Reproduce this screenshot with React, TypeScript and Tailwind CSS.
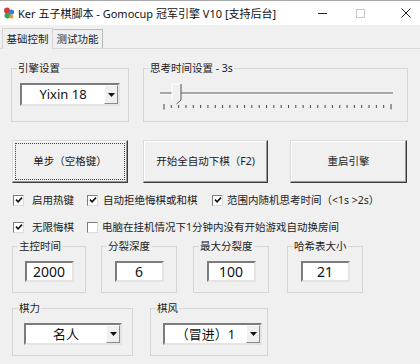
import type { ReactNode } from 'react';

const sunken =
  'border-2 border-t-[#7c7c7c] border-l-[#7c7c7c] border-r-[#e4e4e4] border-b-[#e4e4e4] bg-white';

function Group({ label, className, children }: { label: string; className: string; children?: ReactNode }) {
  return (
    <fieldset className={`border border-[#d6d6d6] ${className}`}>
      <legend className="ml-[5px] px-[1px] text-[10.5px] leading-[14px] text-[#222]">{label}</legend>
      {children}
    </fieldset>
  );
}

function Combo({ value, className }: { value: string; className: string }) {
  return (
    <div className={`flex ${sunken} ${className}`}>
      <div className="flex flex-1 items-center justify-center text-[13px] leading-none text-[#111]">{value}</div>
      <div className="flex w-[14px] items-center justify-center border border-t-white border-l-white border-r-[#8a8a8a] border-b-[#8a8a8a] bg-[#f0f0f0]">
        <svg width="7" height="4" viewBox="0 0 7 4">
          <path d="M0 0h7L3.5 4z" fill="#111" />
        </svg>
      </div>
    </div>
  );
}

function NumBox({ value }: { value: string }) {
  return (
    <div className={`mx-auto mt-[8px] flex h-[21px] w-[49px] items-center justify-center ${sunken} text-[14px] leading-none text-[#111]`}>
      {value}
    </div>
  );
}

function Check({ checked, label, className, labelClass }: { checked: boolean; label: string; className: string; labelClass: string }) {
  return (
    <div className={`flex items-center ${className}`}>
      <div className="flex h-[11px] w-[11px] shrink-0 items-center justify-center border border-t-[#7c7c7c] border-l-[#7c7c7c] border-r-[#dcdcdc] border-b-[#dcdcdc] bg-white">
        {checked && (
          <svg width="8" height="8" viewBox="0 0 8 8">
            <path d="M1 3.6L3.1 5.8L7 1.6" stroke="#111" strokeWidth="1.6" fill="none" />
          </svg>
        )}
      </div>
      <span className={`whitespace-nowrap text-[10.5px] leading-none text-[#222] ${labelClass}`}>{label}</span>
    </div>
  );
}

function Slider() {
  const ticks = Array.from({ length: 32 }, (_, i) => 20 + (i * 227) / 31);
  return (
    <svg width="263" height="40" viewBox="0 0 263 40" className="block">
      <line x1="16" y1="18" x2="249" y2="18" stroke="#8e8e8e" strokeWidth="1.5" />
      <line x1="16" y1="19.5" x2="249" y2="19.5" stroke="#fbfbfb" strokeWidth="1" />
      <path d="M28 9H37V25L32.5 29L28 25Z" fill="#f0f0f0" />
      <path d="M28 25V9H37" stroke="#ffffff" fill="none" />
      <path d="M37 9V25L32.5 29" stroke="#555" fill="none" />
      {ticks.map((x, i) => (
        <line
          key={i}
          x1={x}
          x2={x}
          y1={i === 0 || i === 31 ? 29 : 30}
          y2={i === 0 || i === 31 ? 34.5 : 33}
          stroke="#444"
          strokeWidth="1"
        />
      ))}
    </svg>
  );
}

export default function App() {
  return (
    <div className="h-[364px] w-[420px] overflow-hidden bg-[#f0f0f0] font-['Noto_Sans','Noto_Sans_CJK_SC',sans-serif] text-[#222]">
      {/* title bar */}
      <div className="flex h-[25px] items-center border-t border-[#a9a9a9] bg-white">
        <svg width="12" height="12" viewBox="0 0 12 12" className="ml-[3px]">
          <circle cx="4" cy="3.5" r="3" fill="#d83b3b" />
          <circle cx="8.5" cy="5" r="2.6" fill="#3a7bd5" />
          <circle cx="4.5" cy="8.5" r="3" fill="#3fa34d" />
          <circle cx="8.5" cy="9.5" r="2" fill="#e0a02a" />
        </svg>
        <span className="ml-[3px] whitespace-nowrap text-[11px] leading-none text-[#111]">
          Ker 五子棋脚本 - Gomocup 冠军引擎 V10 [支持后台]
        </span>
        <div className="ml-auto flex items-center">
          <div className="h-[1px] w-[9px] bg-[#222]" />
          <div className="ml-[29px] h-[9px] w-[9px] border border-[#c8c8c8]" />
          <svg width="10" height="10" viewBox="0 0 10 10" className="ml-[36px] mr-[9px]">
            <path d="M0.5 0.5L9.5 9.5M9.5 0.5L0.5 9.5" stroke="#222" strokeWidth="1" />
          </svg>
        </div>
      </div>

      {/* tabs */}
      <div className="flex h-[24px] items-end border-b border-[#d9d9d9]">
        <div className="-mb-px ml-[2px] flex h-[21px] w-[51px] items-center justify-center border-x border-t border-[#d2d2d2] bg-[#f0f0f0] text-[10.5px] leading-none">
          基础控制
        </div>
        <div className="flex h-[19px] w-[50px] items-center justify-center border-r border-t border-[#b9b9b9] text-[10.5px] leading-none">
          测试功能
        </div>
      </div>

      {/* engine + think time */}
      <div className="mt-[12px] flex">
        <Group label="引擎设置" className="ml-[11px] h-[61px] w-[118px]">
          <Combo value="Yixin 18" className="ml-[8px] mt-[8px] h-[23px] w-[100px]" />
        </Group>
        <Group label="思考时间设置 - 3s" className="ml-[14px] h-[61px] w-[265px]">
          <Slider />
        </Group>
      </div>

      {/* buttons */}
      <div className="mt-[18px] flex text-[10.5px]">
        <button className="ml-[12px] flex h-[43px] w-[116px] items-center justify-center border border-t-[#dadada] border-l-[#dadada] border-r-[#3c3c3c] border-b-[#3c3c3c] bg-[#f0f0f0] leading-none shadow-[inset_-1px_-1px_0_#9a9a9a,inset_1px_1px_0_#ffffff] outline-1 -outline-offset-4 outline-dotted outline-[#444]">
          单步（空格键）
        </button>
        <button className="ml-[15px] flex h-[43px] w-[125px] items-center justify-center border border-t-[#dadada] border-l-[#dadada] border-r-[#3c3c3c] border-b-[#3c3c3c] bg-[#f0f0f0] leading-none shadow-[inset_-1px_-1px_0_#9a9a9a,inset_1px_1px_0_#ffffff]">
          开始全自动下棋（F2)
        </button>
        <button className="ml-[22px] flex h-[43px] w-[117px] items-center justify-center border border-t-[#dadada] border-l-[#dadada] border-r-[#3c3c3c] border-b-[#3c3c3c] bg-[#f0f0f0] leading-none shadow-[inset_-1px_-1px_0_#9a9a9a,inset_1px_1px_0_#ffffff]">
          重启引擎
        </button>
      </div>

      {/* options */}
      <div className="mt-[9px] flex h-[16px] items-center pl-[13px]">
        <Check checked label="启用热键" className="w-[74px]" labelClass="ml-[8px]" />
        <Check checked label="自动拒绝悔棋或和棋" className="w-[125px]" labelClass="ml-[5px]" />
        <Check checked label="范围内随机思考时间（<1s >2s）" className="" labelClass="ml-[4px]" />
      </div>
      <div className="mt-[11px] flex h-[16px] items-center pl-[13px]">
        <Check checked label="无限悔棋" className="w-[74px]" labelClass="ml-[8px]" />
        <Check checked={false} label="电脑在挂机情况下1分钟内没有开始游戏自动换房间" className="" labelClass="ml-[4px]" />
      </div>

      {/* numbers */}
      <div className="mt-[4px] flex">
        <Group label="主控时间" className="ml-[12px] h-[54px] w-[74px]">
          <NumBox value="2000" />
        </Group>
        <Group label="分裂深度" className="ml-[15px] h-[54px] w-[76px]">
          <NumBox value="6" />
        </Group>
        <Group label="最大分裂度" className="ml-[16px] h-[54px] w-[76px]">
          <NumBox value="100" />
        </Group>
        <Group label="哈希表大小" className="ml-[18px] h-[54px] w-[76px]">
          <NumBox value="21" />
        </Group>
      </div>

      {/* strength / style */}
      <div className="mt-[8px] flex">
        <Group label="棋力" className="ml-[12px] h-[55px] w-[121px]">
          <Combo value="名人" className="ml-[11px] mt-[8px] h-[22px] w-[98px]" />
        </Group>
        <Group label="棋风" className="ml-[17px] h-[55px] w-[118px]">
          <Combo value="（冒进）1" className="ml-[12px] mt-[8px] h-[22px] w-[99px]" />
        </Group>
      </div>
    </div>
  );
}
